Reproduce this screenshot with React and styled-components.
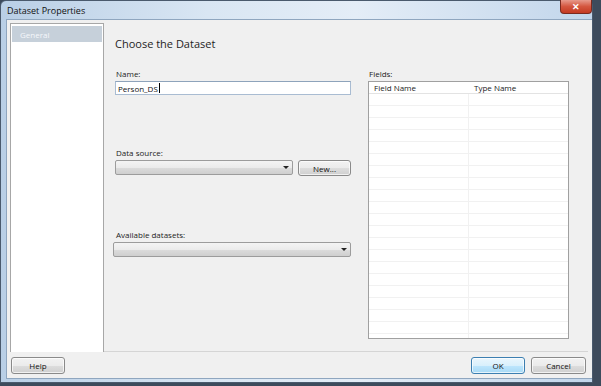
import React from 'react';
import styled, { createGlobalStyle } from 'styled-components';

const GlobalStyle = createGlobalStyle`
    html, body {
        margin: 0;
        padding: 0;
        background: #3d4b5c;
        font-family: "Open Sans", "Noto Sans", "Liberation Sans", sans-serif;
    }
`;

const Window = styled.div`
    position: relative;
    width: 593px;
    height: 383px;
    box-sizing: border-box;
    border: 1px solid #4a5a6d;
    border-radius: 6px 6px 0 0;
    background: linear-gradient(to right, #b9cfe6 0%, #d9e6f3 35%, #e4edf7 60%, #c2d6eb 100%);
    display: flex;
    flex-direction: column;
`;

const TitleBar = styled.div`
    height: 18px;
    display: flex;
    align-items: center;
    padding-left: 6px;
    font-size: 9px;
    color: #111;
`;

const CloseButton = styled.div`
    position: absolute;
    top: -1px;
    right: 0;
    width: 30px;
    height: 13px;
    border: 1px solid #7a2a1f;
    border-top: none;
    border-radius: 0 0 4px 4px;
    background: linear-gradient(#e79a8c 0%, #d4563f 50%, #c33a22 100%);
    display: flex;
    align-items: center;
    justify-content: center;
    color: #fff;
    font-size: 9px;
    font-weight: bold;
`;

const Client = styled.div`
    flex: 1;
    margin: 0 0 3px 5px;
    border: 1px solid #8fa6bf;
    border-right: none;
    background: #f0f0f0;
    display: flex;
    flex-direction: column;
`;

const Body = styled.div`
    flex: 1;
    display: flex;
    padding: 3px 0 0 3px;
`;

const Nav = styled.div`
    width: 90px;
    background: #fff;
    border: 1px solid #a7a7a7;
    border-bottom: none;
    padding: 2px 1px;
`;

const NavItem = styled.div`
    height: 16px;
    display: flex;
    align-items: center;
    padding-left: 8px;
    background: ${p => (p.active ? '#c6d0da' : 'transparent')};
    color: ${p => (p.active ? '#f5f7fa' : '#222')};
    font-size: 8px;
`;

const Content = styled.div`
    flex: 1;
    border-bottom: 1px solid #d5d5d5;
    margin-right: 4px;
    padding: 14px 0 0 11px;
    display: flex;
    flex-direction: column;
`;

const Heading = styled.div`
    font-size: 11px;
    line-height: 14px;
    color: #1e1e1e;
`;

const Columns = styled.div`
    display: flex;
    margin-top: 17px;
    gap: 17px;
`;

const FormColumn = styled.div`
    width: 236px;
    display: flex;
    flex-direction: column;
`;

const Label = styled.div`
    font-size: 8px;
    line-height: 11px;
    color: #222;
    margin-top: ${p => p.gap || 0}px;
    margin-left: ${p => p.indent || 1}px;
    margin-bottom: 2px;
`;

const TextBox = styled.div`
    height: 14px;
    box-sizing: border-box;
    border: 1px solid #a9bcd2;
    border-top-color: #8ea3bb;
    background: #fff;
    font-size: 8px;
    display: flex;
    align-items: center;
    padding-left: 2px;
    color: #111;
`;

const Caret = styled.span`
    display: inline-block;
    width: 1px;
    height: 10px;
    background: #000;
    margin-left: 1px;
`;

const Row = styled.div`
    display: flex;
    gap: 5px;
`;

const Combo = styled.div`
    width: ${p => p.width}px;
    margin-left: ${p => p.shift || 0}px;
    height: 15px;
    box-sizing: border-box;
    border: 1px solid #9c9c9c;
    border-radius: 2px;
    background: linear-gradient(#f4f4f4 0%, #ebebeb 50%, #dcdcdc 51%, #cfcfcf 100%);
    display: flex;
    align-items: center;
    justify-content: flex-end;
    padding-right: 3px;
`;

const Arrow = styled.span`
    width: 0;
    height: 0;
    border-left: 3px solid transparent;
    border-right: 3px solid transparent;
    border-top: 3px solid #222;
`;

const Button = styled.div`
    width: ${p => p.width || 54}px;
    height: ${p => p.height || 17}px;
    box-sizing: border-box;
    border: 1px solid ${p => (p.primary ? '#3c7fb1' : '#8a8a8a')};
    border-radius: 3px;
    background: ${p => (p.primary
        ? 'linear-gradient(#eaf6fd 0%, #d9f0fc 50%, #bee6fd 51%, #a7d9f5 100%)'
        : 'linear-gradient(#f2f2f2 0%, #ebebeb 50%, #dddddd 51%, #cfcfcf 100%)')};
    box-shadow: inset 0 0 0 1px rgba(255, 255, 255, 0.7);
    display: flex;
    align-items: center;
    justify-content: center;
    font-size: 8px;
    color: #111;
`;

const FieldsColumn = styled.div`
    width: 201px;
    display: flex;
    flex-direction: column;
`;

const ListBox = styled.div`
    height: 258px;
    box-sizing: border-box;
    border: 1px solid #a0a0a0;
    background: #fff;
    display: flex;
    flex-direction: column;
    overflow: hidden;
`;

const ListHeader = styled.div`
    height: 15px;
    display: grid;
    grid-template-columns: 100px 1fr;
    border-bottom: 1px solid #e3e3e3;
    font-size: 8px;
    color: #222;
`;

const HeaderCell = styled.div`
    display: flex;
    align-items: center;
    padding-left: 5px;
`;

const ListRow = styled.div`
    height: 11px;
    flex-shrink: 0;
    display: grid;
    grid-template-columns: 100px 1fr;
    border-bottom: 1px solid #f1f1f1;
`;

const Cell = styled.div`
    border-right: 1px solid ${p => (p.last ? 'transparent' : '#f1f1f1')};
`;

const Footer = styled.div`
    height: 26px;
    display: flex;
    align-items: center;
    padding: 0 6px 0 4px;
    gap: 6px;
`;

const Spacer = styled.div`
    flex: 1;
`;

export default function App() {
    const rows = Array.from({ length: 22 });
    return (
        <>
            <GlobalStyle />
            <Window>
                <TitleBar>Dataset Properties</TitleBar>
                <CloseButton>✕</CloseButton>
                <Client>
                    <Body>
                        <Nav>
                            <NavItem active>General</NavItem>
                        </Nav>
                        <Content>
                            <Heading>Choose the Dataset</Heading>
                            <Columns>
                                <FormColumn>
                                    <Label>Name:</Label>
                                    <TextBox>Person_DS<Caret /></TextBox>

                                    <Label gap={52}>Data source:</Label>
                                    <Row>
                                        <Combo width={178}><Arrow /></Combo>
                                        <Button width={53} height={16}>New...</Button>
                                    </Row>

                                    <Label gap={53}>Available datasets:</Label>
                                    <Combo width={238} shift={-2}><Arrow /></Combo>
                                </FormColumn>
                                <FieldsColumn>
                                    <Label>Fields:</Label>
                                    <ListBox>
                                        <ListHeader>
                                            <HeaderCell>Field Name</HeaderCell>
                                            <HeaderCell>Type Name</HeaderCell>
                                        </ListHeader>
                                        {rows.map((_, i) => (
                                            <ListRow key={i}>
                                                <Cell />
                                                <Cell last />
                                            </ListRow>
                                        ))}
                                    </ListBox>
                                </FieldsColumn>
                            </Columns>
                        </Content>
                    </Body>
                    <Footer>
                        <Button>Help</Button>
                        <Spacer />
                        <Button primary width={54}>OK</Button>
                        <Button width={55}>Cancel</Button>
                    </Footer>
                </Client>
            </Window>
        </>
    );
}
